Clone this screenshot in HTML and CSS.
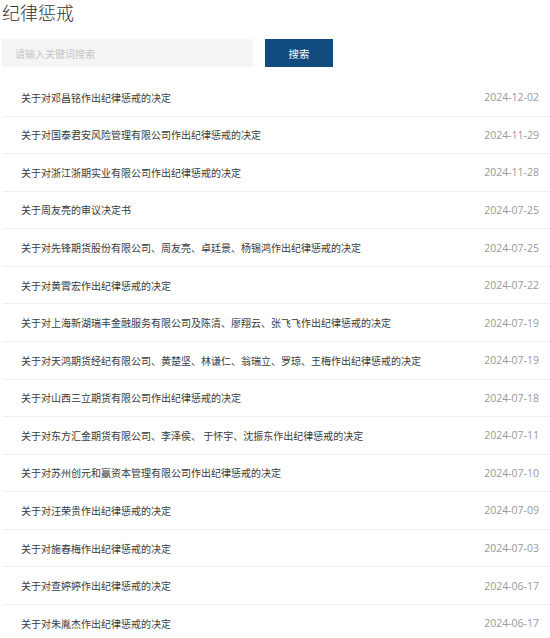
FILE: index.html
```html
<!DOCTYPE html>
<html lang="zh-CN">
<head>
    <meta charset="UTF-8">
    <meta name="viewport" content="width=device-width, initial-scale=1.0">
    <title>纪律惩戒</title>
    <link rel="stylesheet" href="styles.css">
</head>
<body>
    <div class="page">
        <h1 class="title">纪律惩戒</h1>

        <div class="search-bar">
            <input type="text" class="search-input" placeholder="请输入关键词搜索">
            <button class="search-btn">搜索</button>
        </div>

        <ul class="news-list">
            <li class="news-item"><a href="#">关于对邓昌铭作出纪律惩戒的决定</a><span class="date">2024-12-02</span></li>
            <li class="news-item"><a href="#">关于对国泰君安风险管理有限公司作出纪律惩戒的决定</a><span class="date">2024-11-29</span></li>
            <li class="news-item"><a href="#">关于对浙江浙期实业有限公司作出纪律惩戒的决定</a><span class="date">2024-11-28</span></li>
            <li class="news-item"><a href="#">关于周友亮的审议决定书</a><span class="date">2024-07-25</span></li>
            <li class="news-item"><a href="#">关于对先锋期货股份有限公司、周友亮、卓廷景、杨锡鸿作出纪律惩戒的决定</a><span class="date">2024-07-25</span></li>
            <li class="news-item"><a href="#">关于对黄霄宏作出纪律惩戒的决定</a><span class="date">2024-07-22</span></li>
            <li class="news-item"><a href="#">关于对上海新湖瑞丰金融服务有限公司及陈清、廖翔云、张飞飞作出纪律惩戒的决定</a><span class="date">2024-07-19</span></li>
            <li class="news-item"><a href="#">关于对天鸿期货经纪有限公司、黄楚坚、林谦仁、翁瑞立、罗琼、王梅作出纪律惩戒的决定</a><span class="date">2024-07-19</span></li>
            <li class="news-item"><a href="#">关于对山西三立期货有限公司作出纪律惩戒的决定</a><span class="date">2024-07-18</span></li>
            <li class="news-item"><a href="#">关于对东方汇金期货有限公司、李泽侯、 于怀宇、沈振东作出纪律惩戒的决定</a><span class="date">2024-07-11</span></li>
            <li class="news-item"><a href="#">关于对苏州创元和赢资本管理有限公司作出纪律惩戒的决定</a><span class="date">2024-07-10</span></li>
            <li class="news-item"><a href="#">关于对汪荣贵作出纪律惩戒的决定</a><span class="date">2024-07-09</span></li>
            <li class="news-item"><a href="#">关于对施春梅作出纪律惩戒的决定</a><span class="date">2024-07-03</span></li>
            <li class="news-item"><a href="#">关于对查婷婷作出纪律惩戒的决定</a><span class="date">2024-06-17</span></li>
            <li class="news-item"><a href="#">关于对朱胤杰作出纪律惩戒的决定</a><span class="date">2024-06-17</span></li>
        </ul>
    </div>
</body>
</html>
```

FILE: styles.css
```css
* {
    margin: 0;
    padding: 0;
    box-sizing: border-box;
}

body {
    font-family: "Open Sans", "Noto Sans CJK SC", sans-serif;
    background: #fff;
    color: #333;
    overflow: hidden;
}

.page {
    padding-left: 2px;
}

.title {
    font-size: 18px;
    font-weight: 300;
    line-height: 26px;
    color: #333;
    margin-bottom: 13px;
}

.search-bar {
    display: flex;
    gap: 12px;
    margin-bottom: 12px;
}

.search-input {
    width: 251px;
    height: 28px;
    border: none;
    outline: none;
    background: #f5f5f5;
    padding: 0 13px;
    font-family: "Noto Sans CJK SC", sans-serif;
    font-size: 10px;
    color: #333;
}

.search-input::placeholder {
    color: #c4c4c4;
}

.search-btn {
    width: 68px;
    height: 28px;
    border: none;
    background: #124c7e;
    color: #fff;
    font-family: "Noto Sans CJK SC", sans-serif;
    font-size: 10.5px;
    cursor: pointer;
}

.news-list {
    list-style: none;
    margin-left: 1px;
}

.news-item {
    height: 37.57px;
    display: flex;
    align-items: center;
    justify-content: space-between;
    padding: 0 11px 0 18px;
    border-bottom: 1px solid #efefef;
}

.news-item a {
    font-family: "Noto Sans CJK SC", sans-serif;
    font-size: 10px;
    color: #3a3a3a;
    text-decoration: none;
    white-space: nowrap;
}

.date {
    font-size: 10.5px;
    color: #999;
}
```
